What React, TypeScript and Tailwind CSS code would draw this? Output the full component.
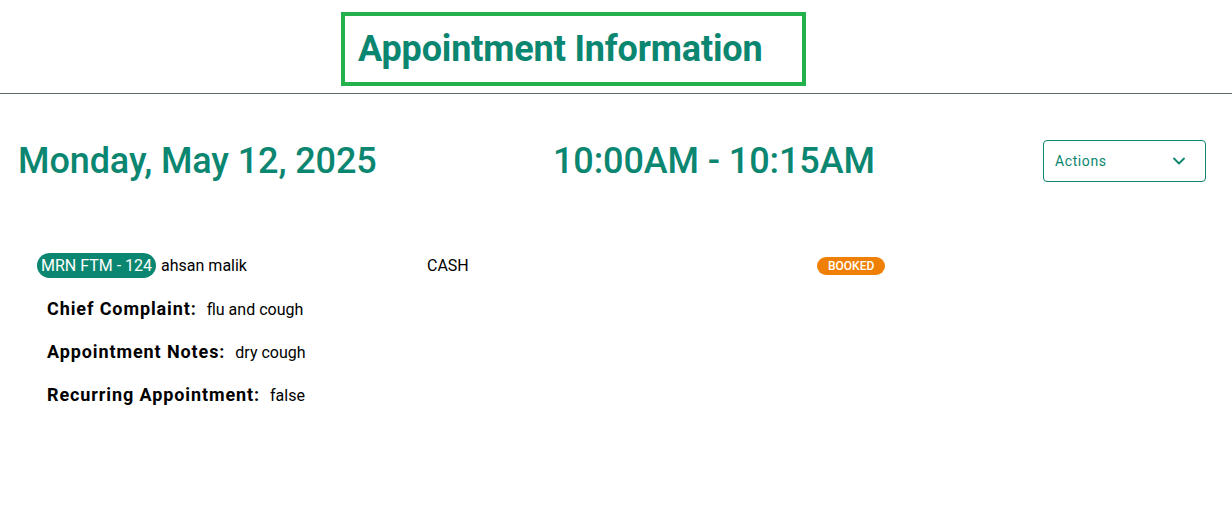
import { ChevronDown } from "lucide-react";

const appointment = {
  date: "Monday, May 12, 2025",
  time: "10:00AM - 10:15AM",
  mrn: "MRN FTM - 124",
  patient: "ahsan malik",
  payment: "CASH",
  status: "BOOKED",
  details: [
    { label: "Chief Complaint:", value: "flu and cough" },
    { label: "Appointment Notes:", value: "dry cough" },
    { label: "Recurring Appointment:", value: "false" },
  ],
};

export default function App() {
  return (
    <div className="min-h-[508px] w-full bg-white font-['Roboto',sans-serif] text-black">
      <div className="flex h-[94px] border-b border-[#5f6b68] pl-[341px] pt-[12px]">
        <div className="flex h-[74px] w-[465px] items-center border-4 border-[#22b14c] pl-[13px]">
          <h1 className="text-[36px] font-bold leading-none tracking-[-0.15px] text-[#0b8670]">
            Appointment Information
          </h1>
        </div>
      </div>

      <div className="flex items-center pl-[18px] pr-[26px] pt-[46px]">
        <div className="w-[535px] text-[36px] font-medium leading-none tracking-[-0.1px] text-[#0b8670]">
          {appointment.date}
        </div>
        <div className="text-[36px] font-medium leading-none tracking-[-0.1px] text-[#0b8670]">
          {appointment.time}
        </div>
        <button
          type="button"
          className="ml-auto flex h-[42px] w-[163px] items-center justify-between rounded-[4px] border border-[#0b8670] pl-[11px] pr-[16px] text-[14px] tracking-[0.6px] text-[#0b8670]"
        >
          Actions
          <ChevronDown size={20} strokeWidth={2.2} />
        </button>
      </div>

      <div className="flex items-center pl-[37px] pt-[71px]">
        <div className="flex w-[390px] items-center">
          <span className="flex h-[25px] items-center rounded-full bg-[#0b8670] px-[4px] text-[16px] text-white">
            {appointment.mrn}
          </span>
          <span className="ml-[5px] text-[16px]">{appointment.patient}</span>
        </div>
        <div className="w-[390px] text-[16px]">{appointment.payment}</div>
        <span className="flex h-[18px] items-center rounded-full bg-[#ef7f05] px-[11px] text-[12px] font-medium text-white">
          {appointment.status}
        </span>
      </div>

      <div className="flex flex-col gap-[16px] pl-[47px] pt-[17px]">
        {appointment.details.map((d) => (
          <div key={d.label} className="flex items-baseline gap-[10px]">
            <span className="text-[18px] font-bold tracking-[0.9px]">{d.label}</span>
            <span className="text-[16px]">{d.value}</span>
          </div>
        ))}
      </div>
    </div>
  );
}
